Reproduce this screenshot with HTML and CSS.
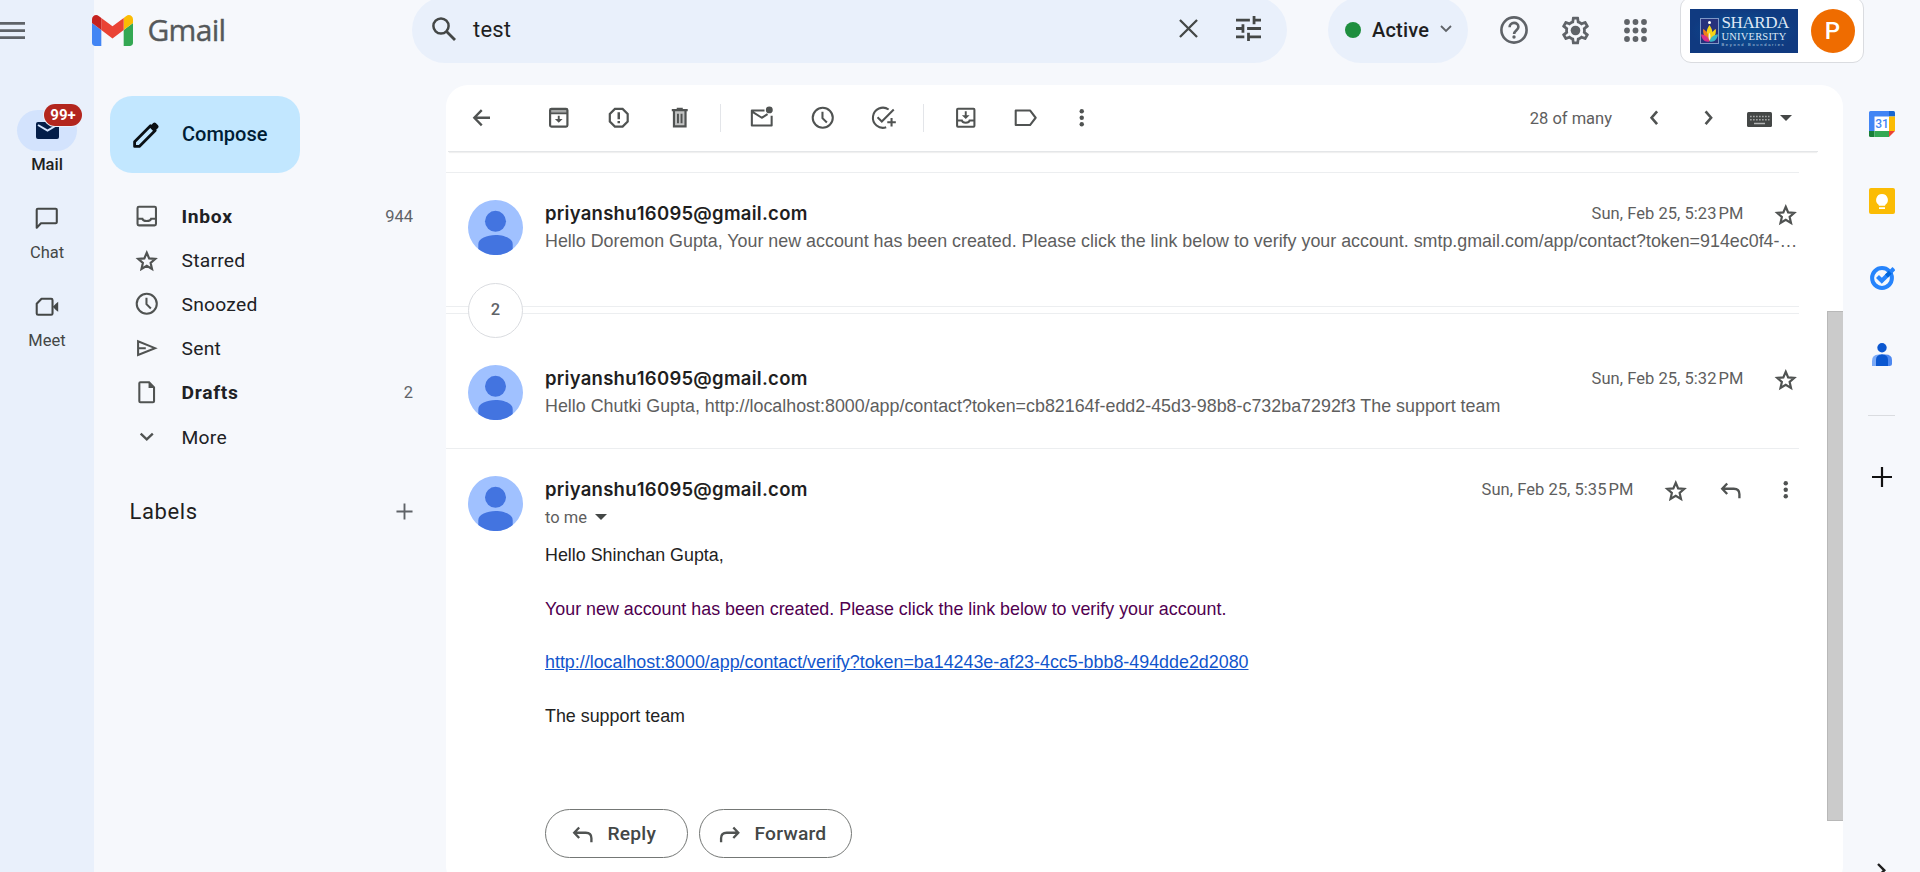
FILE: index.html
```html
<!DOCTYPE html>
<html lang="en">
<head>
<meta charset="utf-8">
<title>Gmail</title>
<link rel="stylesheet" href="styles.css">
</head>
<body>
<svg class="defs" aria-hidden="true">
  <symbol id="star" viewBox="0 0 20 20"><path fill="none" stroke="currentColor" stroke-width="1.600" d="M10 4.900l1.750 4.100 4.450.4-3.380 2.950 1 4.350L10 14.400 6.180 16.700l1-4.350L3.800 9.400l4.450-.4z"/></symbol>
  <symbol id="clock" viewBox="0 0 20 20"><g fill="none" stroke="currentColor" stroke-width="1.500"><circle cx="10" cy="10" r="7.300"/><path d="M9.800 5.600v4.700l3.200 3.100"/></g></symbol>
  <symbol id="dots" viewBox="0 0 20 20"><g fill="currentColor"><circle cx="10" cy="5.300" r="1.600"/><circle cx="10" cy="10" r="1.600"/><circle cx="10" cy="14.700" r="1.600"/></g></symbol>
  <symbol id="reply" viewBox="0 0 20 20"><path fill="none" stroke="currentColor" stroke-width="1.700" d="M7.400 5.500L3.800 9.300l3.600 3.800M4 9.300h8.200c2.500 0 4.100 1.500 4.100 4v2.800"/></symbol>
  <symbol id="forward" viewBox="0 0 20 20"><path fill="none" stroke="currentColor" stroke-width="1.700" d="M12.600 5.500l3.600 3.800-3.600 3.800M16 9.300H7.800c-2.500 0-4.100 1.500-4.100 4v2.800"/></symbol>
  <symbol id="person" viewBox="0 0 55 55"><circle cx="27.500" cy="27.500" r="27.500" fill="#a0c1ff"/><circle cx="27.500" cy="21.300" r="10.500" fill="#4374e0"/><path fill="#4374e0" d="M10.300 44v5A27.500 27.500 0 0 0 44.700 49V44C44.700 38.500 36 35 27.500 35S10.300 38.500 10.300 44z"/></symbol>
</svg>
<div class="app">
  <header class="header">
    <svg class="menu" viewBox="0 0 25 18"><path fill="#5f6368" d="M0 0h25v2.800H0zM0 7.300h25v2.800H0zM0 14.300h25v2.800H0z"/></svg>
    <svg class="gmail-mark" viewBox="52 42 88 66"><path fill="#4285f4" d="M58 108h14V74L52 59v43c0 3.320 2.690 6 6 6"/><path fill="#34a853" d="M120 108h14c3.320 0 6-2.690 6-6V59l-20 15"/><path fill="#fbbc04" d="M120 48v26l20-15v-8c0-7.420-8.470-11.650-14.400-7.200"/><path fill="#ea4335" d="M72 74V48l24 18 24-18v26L96 92"/><path fill="#c5221f" d="M52 51v8l20 15V48l-5.600-4.200c-5.940-4.450-14.400-.220-14.400 7.200"/></svg>
    <span class="brand">Gmail</span>
    <div class="search">
      <svg class="i-search" viewBox="0 0 24 24"><circle cx="9" cy="9" r="7.600" fill="none" stroke="#444746" stroke-width="2.500"/><path stroke="#444746" stroke-width="2.800" d="M14.300 14.300l8.700 8.700"/></svg>
      <span class="query">test</span>
      <svg class="i-x" viewBox="0 0 20 20"><path stroke="#444746" stroke-width="2.400" d="M1 1l18 18M19 1L1 19"/></svg>
      <svg class="i-tune" viewBox="3 3 18 18"><path fill="#444746" d="M3 17v2h6v-2H3zM3 5v2h10V5H3zm10 16v-2h8v-2h-8v-2h-2v6h2zM7 9v2H3v2h4v2h2V9H7zm14 4v-2H11v2h10zm-6-4h2V7h4V5h-4V3h-2v6z"/></svg>
    </div>
    <div class="status"><span class="status-dot"></span><span class="status-text">Active</span><svg class="i-chev" viewBox="0 0 12 8"><path fill="none" stroke="#5f6368" stroke-width="1.800" d="M1 1l5 5 5-5"/></svg></div>
    <svg class="i-help" viewBox="0 0 28 28"><circle cx="14" cy="14" r="12.600" fill="none" stroke="#5f6368" stroke-width="2.600"/><path fill="none" stroke="#5f6368" stroke-width="2.600" d="M9.600 11.200c0-2.600 1.900-4.300 4.400-4.300s4.400 1.700 4.400 4c0 3.100-4.300 3.500-4.300 7.200"/><circle cx="14" cy="21" r="1.700" fill="#5f6368"/></svg>
    <svg class="i-gear" viewBox="0 0 24 24"><path fill="#5f6368" d="M19.430 12.980c.04-.32.07-.64.07-.98 0-.34-.03-.66-.07-.98l2.110-1.650c.19-.15.24-.42.12-.64l-2-3.460c-.09-.16-.26-.25-.44-.25-.06 0-.12.01-.17.03l-2.490 1c-.52-.4-1.080-.73-1.690-.98l-.38-2.650C14.460 2.180 14.250 2 14 2h-4c-.25 0-.46.18-.49.42l-.38 2.650c-.61.25-1.170.59-1.690.98l-2.490-1c-.06-.02-.12-.03-.18-.03-.17 0-.34.09-.43.25l-2 3.460c-.13.22-.07.49.12.64l2.110 1.650c-.04.32-.07.65-.07.98 0 .33.03.66.07.98l-2.110 1.650c-.19.15-.24.42-.12.64l2 3.460c.09.16.26.25.44.25.06 0 .12-.01.17-.03l2.490-1c.52.4 1.080.73 1.690.98l.38 2.650c.03.24.24.42.49.42h4c.25 0 .46-.18.49-.42l.38-2.650c.61-.25 1.170-.59 1.690-.98l2.490 1c.06.02.12.03.18.03.17 0 .34-.09.43-.25l2-3.460c.12-.22.07-.49-.12-.64l-2.110-1.650zm-1.980-1.710c.04.31.05.52.05.73 0 .21-.02.43-.05.73l-.14 1.130.89.7 1.080.84-.7 1.210-1.270-.51-1.040-.42-.9.68c-.43.32-.84.56-1.250.73l-1.060.43-.16 1.130-.2 1.350h-1.400l-.19-1.350-.16-1.130-1.060-.43c-.43-.18-.83-.41-1.230-.71l-.91-.7-1.060.43-1.270.51-.7-1.210 1.080-.84.89-.7-.14-1.130c-.03-.31-.05-.54-.05-.74s.02-.43.05-.73l.14-1.130-.89-.7-1.080-.84.7-1.210 1.270.51 1.040.42.9-.68c.43-.32.84-.56 1.250-.73l1.060-.43.16-1.130.2-1.350h1.390l.19 1.350.16 1.130 1.060.43c.43.18.83.41 1.230.71l.91.7 1.060-.43 1.270-.51.7 1.210-1.070.85-.89.7.14 1.130z"/><circle cx="12" cy="12" r="3.500" fill="#5f6368"/></svg>
    <svg class="i-apps" viewBox="0 0 23 23"><g fill="#5f6368"><circle cx="3" cy="3" r="2.900"/><circle cx="11.500" cy="3" r="2.900"/><circle cx="20" cy="3" r="2.900"/><circle cx="3" cy="11.500" r="2.900"/><circle cx="11.500" cy="11.500" r="2.900"/><circle cx="20" cy="11.500" r="2.900"/><circle cx="3" cy="20" r="2.900"/><circle cx="11.500" cy="20" r="2.900"/><circle cx="20" cy="20" r="2.900"/></g></svg>
    <div class="account">
      <div class="sharda">
        <svg class="crest" viewBox="0 0 19 26"><rect x=".5" y=".5" width="18" height="25" fill="#26317c" stroke="#7f97c6"/><circle cx="9.500" cy="4.500" r="1.500" fill="#fff"/><path fill="#f7d417" d="M9.500 7c4 6 4 11 0 16c-4-5-4-10 0-16z"/><path fill="#ef7d1c" d="M3 11c4 2 6 6 6.500 12C5 21 3 17 3 11z"/><path fill="#f7d417" d="M16 11c-4 2-6 6-6.500 12C14 21 16 17 16 11z"/><path fill="#d72e8a" d="M1 16.500c4 0 7 2 8.500 7C5 24.500 2 22 1 16.500z"/><path fill="#38b6c8" d="M18 16.500c-4 0-7 2-8.500 7C14 24.500 17 22 18 16.500z"/><path fill="#e8eefa" d="M9.500 14.500c1.300 3 1.300 5.500 0 8c-1.300-2.500-1.300-5 0-8z"/></svg>
        <div class="sharda-words"><span class="s1">SHARDA</span><span class="s2">UNIVERSITY</span><span class="s3">Beyond Boundaries</span></div>
      </div>
      <span class="avatar-p">P</span>
    </div>
  </header>

  <nav class="rail">
    <div class="rail-item on">
      <span class="pill"><svg class="i-mail" viewBox="0 0 23 17"><rect width="23" height="17" rx="2" fill="#041e49"/><path fill="none" stroke="#d3e3fd" stroke-width="2" d="M2 3l9.500 5.500L21 3"/></svg><b class="badge">99+</b></span>
      <span class="rail-label">Mail</span>
    </div>
    <div class="rail-item chat"><span class="pill"><svg class="ic" viewBox="0 0 20 20"><path fill="none" stroke="#444746" stroke-width="1.500" stroke-linejoin="round" d="M2.700 16.500V3.500q0-.8.800-.8h13q.8 0 .8.800v9q0 .8-.8.800H5.800z"/></svg></span><span class="rail-label">Chat</span></div>
    <div class="rail-item meet"><span class="pill"><svg class="ic" viewBox="0 0 20 20"><path fill="none" stroke="#444746" stroke-width="1.500" stroke-linejoin="round" d="M6.200 3.500h7q1 0 1 1v9.600q0 1-1 1H3.700q-1 0-1-1v-7z"/><path fill="#444746" d="M14.400 9.300l2.200-2.300 1.700-1.300v7.200l-1.700-1.300z"/></svg></span><span class="rail-label">Meet</span></div>
  </nav>

  <aside class="sidebar">
    <button class="compose"><svg class="i-pencil" viewBox="0 0 26 26"><path fill="none" stroke="#0b1014" stroke-width="2.800" stroke-linejoin="round" d="M1.600 24.400v-4.700L17.500 3.800l4.700 4.700L6.300 24.400z"/><path fill="#0b1014" d="M16.300 5l3.900-3.900q1.300-1.100 2.600 0l2.200 2.200q1.100 1.300 0 2.600L21 9.700z"/></svg><span>Compose</span></button>
    <div class="nav bold"><svg class="ic" viewBox="0 0 20 20"><rect x="3.300" y="3.400" width="13.400" height="13.600" rx="1" fill="none" stroke="currentColor" stroke-width="1.500"/><path fill="none" stroke="currentColor" stroke-width="1.500" d="M3.300 12.200h3.500c.4 2.200 6 2.200 6.400 0h3.500"/></svg><span>Inbox</span><i>944</i></div>
    <div class="nav"><svg class="ic"><use href="#star"/></svg><span>Starred</span></div>
    <div class="nav"><svg class="ic"><use href="#clock"/></svg><span>Snoozed</span></div>
    <div class="nav"><svg class="ic" viewBox="0 0 20 20"><path fill="none" stroke="currentColor" stroke-width="1.500" d="M3.700 5.300v10l12.300-5zM4 10.300h5.300"/></svg><span>Sent</span></div>
    <div class="nav bold"><svg class="ic" viewBox="0 0 20 20"><path fill="none" stroke="currentColor" stroke-width="1.500" d="M5.400 3.100h6.300l3.600 3.700v10.100q0 .8-.8.800H5.400q-.8 0-.8-.8V3.900q0-.8.800-.8z"/><path fill="currentColor" d="M11.300 2.900l4.300 4.400h-4.300z"/></svg><span>Drafts</span><i>2</i></div>
    <div class="nav more"><svg class="ic" viewBox="0 0 20 20"><path fill="none" stroke="currentColor" stroke-width="1.700" d="M5.600 7.700l4.400 4.200 4.400-4.200"/></svg><span>More</span></div>
    <div class="labels"><span>Labels</span><svg class="i-plus" viewBox="0 0 18 18"><path stroke="#5f6368" stroke-width="2" d="M9 .5v17M.5 9h17"/></svg></div>
  </aside>

  <main class="card">
    <div class="toolbar">
      <svg class="ic back" viewBox="0 0 20 20"><path fill="none" stroke="currentColor" stroke-width="1.700" d="M10 4.500L4.600 10l5.400 5.500M4.600 10H16"/></svg>
      <svg class="ic" viewBox="0 0 20 20"><path fill="currentColor" opacity=".5" d="M4 4h12v3H4z"/><rect x="3.700" y="3.600" width="12.600" height="12.900" rx="1" fill="none" stroke="currentColor" stroke-width="1.600"/><path stroke="currentColor" stroke-width="1.200" d="M3.800 6.800h12.400"/><path fill="currentColor" d="M9.300 8.600h1.400v2.300h2.100L10 13.700l-2.800-2.800h2.100z"/></svg>
      <svg class="ic" viewBox="0 0 20 20"><path fill="none" stroke="currentColor" stroke-width="1.600" d="M7.200 3.600h5.600l3.700 3.700v5.400l-3.700 3.700H7.200l-3.700-3.700V7.300z"/><path fill="currentColor" d="M9.100 6h1.800v5H9.100zM9.100 12.300h1.800v1.700H9.100z"/></svg>
      <svg class="ic" viewBox="0 0 20 20"><path fill="currentColor" opacity=".35" d="M6 5h8v11H6z"/><path fill="none" stroke="currentColor" stroke-width="1.600" d="M4.200 4.400h11.600M7.800 3.500h4.400M5.800 4.500v11.800h8.400V4.500"/><path stroke="currentColor" stroke-width="1.400" d="M8.700 7v7M11.300 7v7"/></svg>
      <span class="sep"></span>
      <svg class="ic" viewBox="0 0 20 20"><path fill="none" stroke="currentColor" stroke-width="1.500" stroke-linejoin="round" d="M12 4.700H2.800v10.900h14.400V8.500M3 5.500l7 4.500 4.200-2.600"/><circle cx="15.500" cy="4.300" r="2.500" fill="currentColor"/></svg>
      <svg class="ic"><use href="#clock"/></svg>
      <svg class="ic" viewBox="0 0 20 20"><path fill="none" stroke="currentColor" stroke-width="1.500" d="M14.300 4A7.300 7.300 0 1 0 12.500 16.900M6.200 9.700l3.100 3L18 4M16.400 10.200v6.200M13.300 13.300h6.200"/></svg>
      <span class="sep"></span>
      <svg class="ic" viewBox="0 0 20 20"><rect x="3.700" y="3.500" width="12.600" height="13" rx=".6" fill="none" stroke="currentColor" stroke-width="1.500"/><path fill="none" stroke="currentColor" stroke-width="1.400" d="M3.800 12h3.400c.4 2.200 5.200 2.200 5.600 0h3.400"/><path fill="currentColor" d="M9.300 5.300h1.400v2.800h2.100L10 10.900 7.200 8.100h2.100z"/></svg>
      <svg class="ic label" viewBox="0 0 20 20"><path fill="none" stroke="currentColor" stroke-width="1.500" stroke-linejoin="round" d="M2.700 4.700h10.400l4.100 5.300-4.100 5.300H2.700z"/></svg>
      <svg class="ic"><use href="#dots"/></svg>
      <span class="count">28 of many</span>
      <svg class="ic" viewBox="0 0 20 20"><path fill="none" stroke="currentColor" stroke-width="1.900" d="M11.700 5.300L7.700 10l4 4.700"/></svg>
      <svg class="ic next" viewBox="0 0 20 20"><path fill="none" stroke="currentColor" stroke-width="1.900" d="M7.700 5.300l4 4.700-4 4.700"/></svg>
      <svg class="i-kbd" viewBox="0 0 25 15"><rect width="25" height="15" rx="1.500" fill="#444746"/><path stroke="#fff" opacity=".5" stroke-width="1.600" stroke-dasharray="1.700 1.300" d="M3 4.500h19.500M3 7.800h19.500"/><path stroke="#fff" opacity=".6" stroke-width="1.500" d="M7 11.500h11"/></svg>
      <svg class="i-caret" viewBox="0 0 12 6"><path fill="#444746" d="M0 0h12L6 6z"/></svg>
    </div>
    <div class="body">
      <div class="thread">
        <section class="msg first">
          <svg class="avatar"><use href="#person"/></svg>
          <div class="content">
            <div class="line"><b class="from">priyanshu16095@gmail.com</b><time>Sun, Feb 25, 5:23&#8239;PM</time><svg class="ic"><use href="#star"/></svg></div>
            <p class="snippet">Hello Doremon Gupta, Your new account has been created. Please click the link below to verify your account. smtp.gmail.com/app/contact?token=914ec0f4-…</p>
          </div>
        </section>
        <div class="collapsed"><span class="bubble">2</span></div>
        <section class="msg second">
          <svg class="avatar"><use href="#person"/></svg>
          <div class="content">
            <div class="line"><b class="from">priyanshu16095@gmail.com</b><time>Sun, Feb 25, 5:32&#8239;PM</time><svg class="ic"><use href="#star"/></svg></div>
            <p class="snippet">Hello Chutki Gupta, http://localhost:8000/app/contact?token=cb82164f-edd2-45d3-98b8-c732ba7292f3 The support team</p>
          </div>
        </section>
        <section class="msg third">
          <svg class="avatar"><use href="#person"/></svg>
          <div class="content">
            <div class="line"><b class="from">priyanshu16095@gmail.com</b><time>Sun, Feb 25, 5:35&#8239;PM</time><svg class="ic"><use href="#star"/></svg><svg class="ic"><use href="#reply"/></svg><svg class="ic"><use href="#dots"/></svg></div>
            <div class="to">to me<svg class="i-caret" viewBox="0 0 12 6"><path fill="#444746" d="M0 0h12L6 6z"/></svg></div>
            <div class="text">
              <p>Hello Shinchan Gupta,</p>
              <p class="purple">Your new account has been created. Please click the link below to verify your account.</p>
              <p><a>http://localhost:8000/app/contact/verify?token=ba14243e-af23-4cc5-bbb8-494dde2d2080</a></p>
              <p>The support team</p>
            </div>
            <div class="actions">
              <button class="act reply"><svg class="ic"><use href="#reply"/></svg><span>Reply</span></button>
              <button class="act fwd"><svg class="ic"><use href="#forward"/></svg><span>Forward</span></button>
            </div>
          </div>
        </section>
      </div>
      <div class="scroll"><div class="thumb"></div></div>
    </div>
  </main>

  <aside class="panel">
    <svg class="app-ic" viewBox="0 0 26 26"><path fill="#fff" d="M5 5h16v16H5z"/><path fill="#4285f4" d="M1.500 0H20v5.500H5.500V20H0V1.500Q0 0 1.500 0z"/><path fill="#1967d2" d="M20 0h4.500Q26 0 26 1.500v4h-6z"/><path fill="#fbbc04" d="M20 5.500h6V20h-6z"/><path fill="#188038" d="M0 20h5.500v6H1.500Q0 26 0 24.500z"/><path fill="#34a853" d="M5.500 20H20v6H5.500z"/><path fill="#ea4335" d="M20 20h6l-6 6z"/><text x="13" y="17.400" text-anchor="middle" class="cal">31</text></svg>
    <svg class="app-ic" viewBox="0 0 26 26"><rect width="26" height="26" rx="2" fill="#fbbc04"/><path fill="#fff" d="M13 6a6 6 0 0 1 3.200 11v.7H9.800V17A6 6 0 0 1 13 6zM10 19.200h6v1.900h-6z"/></svg>
    <svg class="app-ic" viewBox="0 0 26 26"><circle cx="13" cy="13" r="9.900" fill="none" stroke="#2684fc" stroke-width="4"/><path fill="none" stroke="#2684fc" stroke-width="4.200" d="M8.500 11.500l4.300 4.300 6.300-6.300"/><path stroke="#0066da" stroke-width="4.200" d="M17.500 11.100l4.500-4.500"/><path stroke="#2684fc" stroke-width="4.200" d="M21.300 7.300l3.700-3.700"/></svg>
    <svg class="app-ic" viewBox="0 0 26 26"><path fill="#7baaf7" d="M3 24v-5Q3 12.500 9.500 12.500H14V24z"/><path fill="#4d88f0" d="M12 12.500h4.500Q23 12.500 23 18v3.500Q23 24 20.500 24H12z"/><path fill="#0b57d0" d="M7 24v-6Q7 12.500 13 12.500t6 5.500v6z"/><circle cx="13" cy="5.800" r="4.700" fill="#0b57d0"/></svg>
    <span class="rule"></span>
    <svg class="panel-plus" viewBox="0 0 20 20"><path stroke="#111" stroke-width="2.200" d="M10 0v20M0 10h20"/></svg>
    <svg class="panel-chev" viewBox="0 0 9 15"><path fill="none" stroke="#1f1f1f" stroke-width="2.400" d="M1 1l6.300 6.300L1 13.600"/></svg>
  </aside>
</div>
</body>
</html>
```
FILE: styles.css
```css
* { box-sizing: border-box; }
body { margin: 0; overflow: hidden; font-family: Roboto, "Noto Sans", sans-serif; color: #1f1f1f; }
p { margin: 0; }
button { font: inherit; color: inherit; margin: 0; padding: 0; border: 0; background: none; }
svg { flex: none; display: block; }
.defs { display: none; }
.ic { width: 27.5px; height: 27.5px; color: #505352; }

.app {
  display: grid;
  grid-template-columns: 94px 352px 1397px 77px;
  grid-template-rows: 85px 787px;
  width: 1920px; height: 872px; overflow: hidden;
  background: linear-gradient(to right, #e9f0fb 94px, #f6f8fc 94px);
}

/* Header */
.header { grid-column: 1 / -1; display: flex; align-items: center; height: 66px; margin-top: -3px; }
.menu { width: 25px; height: 18px; margin-top: 2px; }
.gmail-mark { width: 41px; height: 31px; margin-left: 66.5px; margin-top: 1px; }
.brand { width: 263px; padding-left: 15px; font: 30px/40px "Open Sans", sans-serif; letter-spacing: -.7px; color: #55585a; -webkit-text-stroke: .4px #55585a; }
.search { width: 875px; height: 66px; padding-left: 20px; margin-left: 16.5px; border-radius: 33px; background: #e9f0fb; display: flex; align-items: center; }
.i-search { width: 24px; height: 24px; margin-top: -2px; }
.query { width: 706px; margin-left: 17px; margin-top: -2px; font-size: 22px; letter-spacing: .2px; }
.i-x { width: 19px; height: 19px; margin-top: -3px; }
.i-tune { width: 25px; height: 25px; margin-left: 38px; margin-top: -3px; }
.status { width: 140px; height: 66px; margin-left: 41px; padding-left: 17px; border-radius: 33px; background: #e9f0fb; display: flex; align-items: center; }
.status-dot { width: 16px; height: 16px; border-radius: 50%; background: #1e8e3e; }
.status-text { width: 68px; margin-left: 11px; font-size: 20px; font-weight: 500; letter-spacing: .2px; }
.i-chev { width: 12px; height: 8px; margin-top: -2px; }
.i-help { width: 28px; height: 28px; margin-left: 32px; }
.i-gear { width: 33px; height: 33px; margin-left: 30.5px; }
.i-apps { width: 23px; height: 23px; margin-left: 32px; }
.account { width: 184px; height: 66px; margin-left: 33px; padding: 0 8px 0 9px; border: 1.3px solid #dadce0; border-radius: 11px; background: #fff; display: flex; align-items: center; justify-content: space-between; }
.sharda { width: 108px; height: 44px; margin-top: 2px; display: flex; align-items: center; padding-left: 10px; gap: 3px; background: radial-gradient(ellipse at 50% 50%, #0b5397, #103a80 70%); }
.crest { width: 19px; height: 26px; }
.sharda-words { width: 68px; display: flex; flex-direction: column; color: #dfe8f5; font-family: "Liberation Serif", serif; white-space: nowrap; }
.s1 { font-size: 17px; line-height: 16px; letter-spacing: -.4px; }
.s2 { font-size: 10.5px; line-height: 11px; letter-spacing: .2px; }
.s3 { font-size: 4px; line-height: 5px; letter-spacing: 1.7px; font-family: "Liberation Sans", sans-serif; opacity: .8; }
.avatar-p { width: 44px; height: 44px; margin-top: 2px; border-radius: 50%; background: #ef6c00; color: #fff; font: 500 24px/44px Roboto, sans-serif; text-align: center; }

/* App rail */
.rail { padding-top: 25px; display: flex; flex-direction: column; gap: 23px; }
.rail-item { height: 66px; display: flex; flex-direction: column; align-items: center; }
.pill { position: relative; width: 60px; height: 41px; display: flex; align-items: center; justify-content: center; border-radius: 21px; margin-bottom: 3px; }
.chat .pill { height: 40px; margin-bottom: 3px; }
.meet .pill { height: 39px; margin-bottom: 3px; }
.on .pill { background: #d3e3fd; }
.i-mail { width: 23px; height: 17px; }
.badge { position: absolute; left: 27px; top: -6px; width: 38px; height: 22px; border-radius: 11px; background: #b3261e; box-shadow: 0 0 0 1px #e9f0fb; color: #fff; font: 700 15px/23px Roboto, sans-serif; text-align: center; }
.rail-label { font-size: 16.5px; line-height: 22px; color: #444746; }
.on .rail-label { color: #1f1f1f; font-weight: 500; }

/* Folder list */
.sidebar { padding: 11px 33px 0 16px; }
.compose { width: 190px; height: 77px; border-radius: 22px; background: #c2e7ff; display: flex; align-items: center; padding-left: 23px; font-size: 20px; font-weight: 500; color: #001d35; }
.compose span { margin-left: 23px; margin-top: -1px; }
.i-pencil { width: 26px; height: 26px; }
.compose + .nav { margin-top: 21px; }
.nav { height: 44px; padding-left: 22.5px; display: flex; align-items: center; font-size: 19.25px; color: #202124; }
.nav span { flex: 1; margin-left: 21.5px; letter-spacing: .25px; }
.nav i { font-style: normal; font-weight: 400; font-size: 16.5px; color: #5f6368; }
.bold { font-weight: 700; }
.nav.bold span { letter-spacing: .7px; }
.more { margin-top: 1px; }
.labels { height: 44px; margin-top: 30px; padding-left: 19.5px; display: flex; align-items: center; justify-content: space-between; font-size: 22px; letter-spacing: .6px; }
.i-plus { width: 17px; height: 17px; }

/* Conversation card */
.card { height: 803px; border-radius: 22px; background: #fff; overflow: hidden; }
.toolbar { height: 67px; width: 1370px; margin-left: 2px; padding-left: 19.5px; display: flex; align-items: center; border-bottom: 1px solid #e4e6e8; box-shadow: 0 2px 1px -1px rgba(0, 0, 0, .06); }
.toolbar .ic { margin-right: 33px; }
.toolbar .back { margin-right: 49.5px; }
.toolbar .label { margin-right: 28px; }
.sep { width: 1px; height: 28px; background: #e3e5e9; }
.sep + .ic { margin-left: 27.5px; }
.toolbar .ic:has(+ .sep) { margin-right: 26.5px; }
.count { margin-left: auto; font-size: 16.5px; color: #5e5e5e; margin-right: 29px; }
.toolbar .count + .ic { margin-right: 26px; }
.toolbar .next { margin-right: 25px; }
.i-kbd { width: 25px; height: 15px; margin-top: 3px; }
.i-caret { width: 12px; height: 6px; }
.toolbar .i-caret { margin-left: 8px; margin-right: 26px; }
.body { display: flex; justify-content: space-between; }
.thread { width: 1353px; padding-top: 20px; }
.msg { display: flex; padding-left: 22px; border-top: 1px solid #eceef0; }
.first { height: 134px; padding-top: 27px; }
.second { height: 135px; padding-top: 51px; }
.third { padding-top: 27px; }
.collapsed { position: relative; height: 7px; border-top: 1px solid #eceef0; }
.bubble { position: absolute; left: 22px; top: -24px; width: 55px; height: 55px; border: 1.3px solid #dadce0; border-radius: 50%; background: #fff; font-size: 16.5px; font-weight: 500; line-height: 51px; text-align: center; color: #5f6368; }
.avatar { width: 55px; height: 55px; }
.content { flex: 1; margin-left: 22px; }
.line { display: flex; align-items: center; height: 27px; }
.from { flex: 1; font: 600 18.5px/27px Inter, sans-serif; letter-spacing: .26px; }
time { font-size: 16.5px; letter-spacing: .05px; color: #5e5e5e; margin-right: 28px; }
.line .ic + .ic { margin-left: 27.5px; }
.snippet { font: 17.875px/28px "Liberation Sans", Arial, sans-serif; color: #5e5e5e; white-space: nowrap; }
.to { display: flex; align-items: center; height: 28px; gap: 8px; font-size: 16.5px; color: #5e5e5e; }
.text { font: 17.875px/27px "Liberation Sans", Arial, sans-serif; color: #222; padding-top: 11px; }
.text p { height: 53.6px; }
.text .purple { color: #500050; }
.text a { color: #15c; text-decoration: underline; }
.actions { display: flex; gap: 11px; margin-top: 53px; }
.act { height: 49px; border: 1px solid #747775; border-radius: 25px; display: flex; align-items: center; padding-left: 23px; font-size: 19.25px; font-weight: 500; color: #444746; }
.act span { margin-left: 11px; letter-spacing: .2px; }
.reply { width: 143px; }
.fwd { width: 153px; padding-left: 16px; }
.scroll { width: 16px; padding-top: 159px; }
.thumb { height: 510px; background: #cbcbcb; border: 1px solid #b8b8b8; border-right: 0; }

/* Side panel */
.panel { display: flex; flex-direction: column; align-items: center; padding-top: 26px; }
.app-ic { width: 26px; height: 26px; margin-bottom: 51px; }
.cal { font: 500 12px Roboto, sans-serif; fill: #4285f4; }
.rule { flex: none; width: 27px; height: 1px; margin-top: -4px; background: #dadce0; }
.panel-plus { width: 20px; height: 20px; margin-top: 51px; }
.panel-chev { width: 9px; height: 15px; margin-top: 376px; }
```
